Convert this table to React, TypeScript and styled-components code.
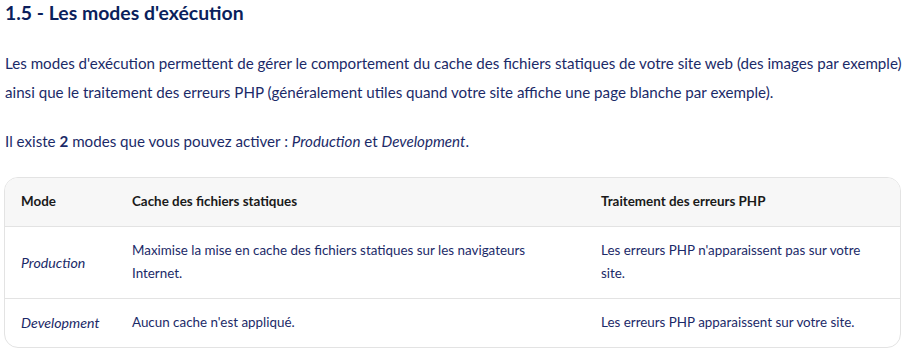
import React from 'react';
import styled, { createGlobalStyle } from 'styled-components';

const GlobalStyle = createGlobalStyle`
  body {
    margin: 0;
    background: #ffffff;
    font-family: 'Lato', 'Noto Sans', sans-serif;
    color: #1b2a68;
  }
`;

const Page = styled.div`
  padding: 0 2px 0 5px;
`;

const Title = styled.h2`
  margin: 0;
  font-size: 19.4px;
  line-height: 26px;
  font-weight: 700;
  color: #0b1f5c;
`;

const Paragraph = styled.p`
  margin: 23px 0 0;
  font-size: 15.15px;
  line-height: 29px;
  color: #1b2a68;

  & + & {
    margin-top: 20px;
  }
`;

const TableBox = styled.div`
  margin: 21px 6px 0 -1px;
  border: 1px solid #e3e3e3;
  border-radius: 14px;
  overflow: hidden;
`;

const Table = styled.table`
  width: 100%;
  border-collapse: collapse;
  font-size: 13.4px;
  line-height: 23px;
`;

const HeadCell = styled.th<{ $width?: string }>`
  text-align: left;
  font-weight: 700;
  color: #1a1a1a;
  background: #f7f7f7;
  padding: 12px 16px 13px;
  width: ${(p) => p.$width || 'auto'};
  border-bottom: 1px solid #e3e3e3;
`;

const Row = styled.tr`
  & + & td {
    border-top: 1px solid #e3e3e3;
  }
`;

const Cell = styled.td<{ $italic?: boolean }>`
  padding: 12px 16px 13px;
  vertical-align: middle;
  color: #1b2a68;
  font-style: ${(p) => (p.$italic ? 'italic' : 'normal')};
  font-size: ${(p) => (p.$italic ? '14.2px' : 'inherit')};
`;

const rows = [
  {
    mode: 'Production',
    cache: 'Maximise la mise en cache des fichiers statiques sur les navigateurs Internet.',
    php: "Les erreurs PHP n'apparaissent pas sur votre site.",
  },
  {
    mode: 'Development',
    cache: "Aucun cache n'est appliqué.",
    php: 'Les erreurs PHP apparaissent sur votre site.',
  },
];

const App: React.FC = () => {
  return (
    <>
      <GlobalStyle />
      <Page>
        <Title>1.5 - Les modes d'exécution</Title>
        <Paragraph>
          Les modes d'exécution permettent de gérer le comportement du cache des fichiers
          statiques de votre site web (des images par exemple) ainsi que le traitement des
          erreurs PHP (généralement utiles quand votre site affiche une page blanche par
          exemple).
        </Paragraph>
        <Paragraph>
          Il existe <strong>2</strong> modes que vous pouvez activer : <em>Production</em> et{' '}
          <em>Development</em>.
        </Paragraph>
        <TableBox>
          <Table>
            <thead>
              <tr>
                <HeadCell $width="79px">Mode</HeadCell>
                <HeadCell $width="437px">Cache des fichiers statiques</HeadCell>
                <HeadCell>Traitement des erreurs PHP</HeadCell>
              </tr>
            </thead>
            <tbody>
              {rows.map((r) => (
                <Row key={r.mode}>
                  <Cell $italic>{r.mode}</Cell>
                  <Cell>{r.cache}</Cell>
                  <Cell>{r.php}</Cell>
                </Row>
              ))}
            </tbody>
          </Table>
        </TableBox>
      </Page>
    </>
  );
};

export default App;
